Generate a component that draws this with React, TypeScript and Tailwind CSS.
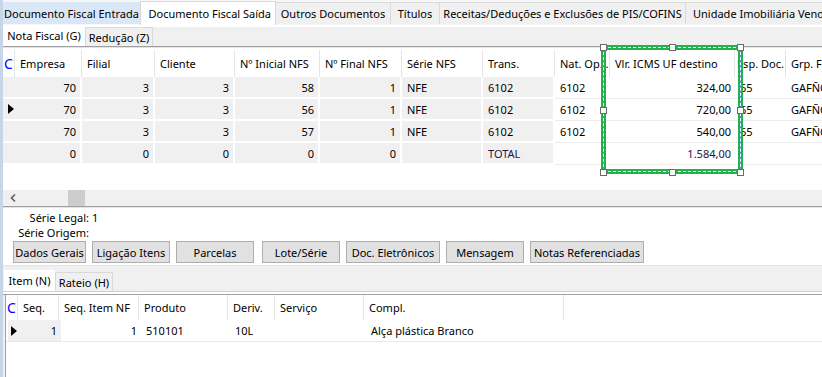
import React from "react";

const F = { fontFamily: '"Noto Sans", "Open Sans", sans-serif' };

type Col = { w: number; label: string; align?: "r" | "l"; pl?: number };

const cols1: Col[] = [
  { w: 67, label: "Empresa", align: "r" },
  { w: 73, label: "Filial", align: "r" },
  { w: 80, label: "Cliente", align: "r" },
  { w: 85, label: "Nº Inicial NFS", align: "r" },
  { w: 82, label: "Nº Final NFS", align: "r" },
  { w: 81, label: "Série NFS" },
  { w: 72, label: "Trans." },
  { w: 55, label: "Nat. Op..." },
  { w: 125, label: "Vlr. ICMS UF destino", align: "r" },
  { w: 51, label: "Esp. Doc.", pl: 2 },
  { w: 120, label: "Grp. Fornecedor" },
];

const rows1 = [
  ["70", "3", "3", "58", "1", "NFE", "6102", "6102", "324,00", "65", "GAFÑOTO"],
  ["70", "3", "3", "56", "1", "NFE", "6102", "6102", "720,00", "65", "GAFÑOTO"],
  ["70", "3", "3", "57", "1", "NFE", "6102", "6102", "540,00", "65", "GAFÑOTO"],
];

function Arrow() {
  return (
    <svg width="6" height="10" viewBox="0 0 6 10" className="block">
      <path d="M0 0 L6 5 L0 10 Z" fill="#000" />
    </svg>
  );
}

function Handle({ x, y }: { x: number; y: number }) {
  return (
    <div
      className="absolute w-[7px] h-[7px] bg-white border border-[#6b6b6b]"
      style={{ left: x - 3, top: y - 3 }}
    />
  );
}

export default function App() {
  return (
    <div
      className="relative w-[822px] h-[377px] overflow-hidden bg-white flex text-[11px] text-black leading-none"
      style={F}
    >
      <div className="w-[3px] shrink-0 bg-[#c6d5ea]" />
      <div className="flex-1 flex flex-col min-w-0">
        {/* top tabs */}
        <div className="h-[25px] shrink-0 flex items-end bg-[#f7f7f7] whitespace-nowrap overflow-hidden">
          <div className="shrink-0 w-[137px] h-[22px] bg-[#dae7f6] flex items-center pl-[1px] mb-[1px]">Documento Fiscal Entrada</div>
          <div className="shrink-0 w-[136px] h-[24px] bg-white border-x border-t border-[#d9d9d9] flex items-center justify-end pr-[4px]">Documento Fiscal Saída</div>
          <div className="shrink-0 w-[115px] h-[22px] bg-[#f0f0f0] border-r border-t border-[#d9d9d9] flex items-center justify-center mb-[1px]">Outros Documentos</div>
          <div className="shrink-0 w-[49px] h-[22px] bg-[#f0f0f0] border-r border-t border-[#d9d9d9] flex items-center justify-center mb-[1px]">Títulos</div>
          <div className="shrink-0 w-[246px] h-[22px] bg-[#f0f0f0] border-r border-t border-[#d9d9d9] flex items-center justify-center mb-[1px]">Receitas/Deduções e Exclusões de PIS/COFINS</div>
          <div className="shrink-0 w-[160px] h-[22px] bg-[#f0f0f0] border-t border-[#d9d9d9] flex items-center pl-[7px] mb-[1px]">Unidade Imobiliária Venda</div>
        </div>
        {/* sub tabs */}
        <div className="h-[21px] shrink-0 flex items-end bg-[#f0f0f0] border-t-[2px] border-white">
          <div className="shrink-0 w-[82px] h-[21px] bg-white flex items-center justify-center">Nota Fiscal (G)</div>
          <div className="shrink-0 w-[68px] h-[19px] bg-[#f0f0f0] border border-b-0 border-[#d9d9d9] flex items-center justify-center">Redução (Z)</div>
        </div>
        <div className="h-[1px] bg-[#a0a0a0] shrink-0" />
        <div className="h-[1px] bg-[#e3e3e3] shrink-0" />
        {/* grid 1 */}
        <div className="h-[142px] shrink-0 bg-white overflow-hidden">
          <div className="h-[29px] flex whitespace-nowrap pt-[2px]">
            <div className="w-[12px] shrink-0 flex items-center justify-center text-[14px] text-[#0000ff] border-r border-[#e5e5e5]">C</div>
            {cols1.map((c, i) => (
              <div
                key={i}
                className="shrink-0 flex items-center border-r border-[#e5e5e5] overflow-hidden"
                style={{ width: c.w, paddingLeft: c.pl ?? 5 }}
              >
                {c.label}
              </div>
            ))}
          </div>
          {rows1.map((r, ri) => (
            <div key={ri} className="h-[22px] flex whitespace-nowrap">
              <div className="w-[12px] shrink-0 bg-[#f0f0f0] border-b-2 border-white flex items-center pl-[5px]">
                {ri === 1 ? <Arrow /> : null}
              </div>
              {cols1.map((c, i) => {
                const gray = i < 7;
                return (
                  <div
                    key={i}
                    className={
                      "shrink-0 flex items-center overflow-hidden " +
                      (gray ? "bg-[#f0f0f0] border-b-2 border-r-2 border-white " : "bg-white border-b border-[#ececec] ") +
                      (c.align === "r" ? "justify-end pr-[4px]" : "pl-[5px]")
                    }
                    style={{ width: c.w }}
                  >
                    {r[i]}
                  </div>
                );
              })}
            </div>
          ))}
          <div className="h-[22px] flex whitespace-nowrap">
            <div className="w-[12px] shrink-0 bg-[#f0f0f0] border-b-2 border-white" />
            {cols1.map((c, i) => {
              const gray = i < 7;
              const vals = ["0", "0", "0", "0", "0", "", "TOTAL", "", "1.584,00", "", ""];
              return (
                <div
                  key={i}
                  className={
                    "shrink-0 flex items-center overflow-hidden " +
                    (gray ? "bg-[#f0f0f0] border-b-2 border-r-2 border-white " : "bg-white border-b border-[#ececec] ") +
                    (c.align === "r" ? "justify-end pr-[4px] " : "pl-[5px] ") +
                    (i >= 6 ? "text-[#2a1245]" : "")
                  }
                  style={{ width: c.w }}
                >
                  {i < 9 ? vals[i] : ""}
                </div>
              );
            })}
          </div>
        </div>
        {/* scrollbar */}
        <div className="h-[16px] shrink-0 bg-[#f0f0f0] flex items-center">
          <div className="w-[17px] flex items-center justify-center pl-[3px]">
            <svg width="6" height="8" viewBox="0 0 6 8" className="block">
              <path d="M5 0.5 L1.5 4 L5 7.5" fill="none" stroke="#606060" strokeWidth="1.6" />
            </svg>
          </div>
          <div className="ml-[48px] w-[17px] h-full bg-[#cdcdcd]" />
        </div>
        <div className="h-[1px] bg-[#a0a0a0] shrink-0" />
        <div className="h-[1px] bg-[#e3e3e3] shrink-0" />
        {/* labels */}
        <div className="flex flex-col pt-[3px] gap-[3px] shrink-0">
          <div className="flex h-[12px] items-center">
            <div className="w-[86px] text-right">Série Legal:</div>
            <div className="pl-[3px]">1</div>
          </div>
          <div className="flex h-[12px] items-center">
            <div className="w-[86px] text-right">Série Origem:</div>
          </div>
        </div>
        {/* buttons */}
        <div className="flex pl-[10px] pt-[3px] gap-[6px] shrink-0 whitespace-nowrap">
          {[
            ["Dados Gerais", 73],
            ["Ligação Itens", 78],
            ["Parcelas", 78],
            ["Lote/Série", 78],
            ["Doc. Eletrônicos", 94],
            ["Mensagem", 78],
            ["Notas Referenciadas", 114],
          ].map(([t, w], i) => (
            <div
              key={i}
              className="shrink-0 h-[22px] bg-[#e1e1e1] border border-[#adadad] flex items-center justify-center"
              style={{ width: w as number, marginLeft: i === 3 ? 2 : 0 }}
            >
              {t}
            </div>
          ))}
        </div>
        <div className="h-[2px] shrink-0" />
        <div className="h-[1px] bg-[#e3e3e3] shrink-0" />
        {/* bottom tabs */}
        <div className="h-[25px] shrink-0 flex items-end bg-[#f0f0f0] pl-[1px]">
          <div className="shrink-0 w-[51px] h-[21px] bg-white flex items-center justify-center">Item (N)</div>
          <div className="shrink-0 w-[58px] h-[19px] bg-[#f0f0f0] border border-b-0 border-[#d9d9d9] flex items-center justify-center">Rateio (H)</div>
        </div>
        <div className="h-[1px] bg-[#d0d0d0] shrink-0" />
        <div className="h-[2px] shrink-0 bg-white" />
        <div className="h-[1px] bg-[#a0a0a0] shrink-0" />
        {/* grid 2 */}
        <div className="flex-1 flex bg-white">
          <div className="w-[2px] bg-[#f0f0f0]" />
          <div className="w-[1px] bg-[#a0a0a0]" />
          <div className="flex-1 flex flex-col">
            <div className="h-[25px] flex whitespace-nowrap">
              <div className="w-[12px] shrink-0 flex items-center justify-center text-[14px] text-[#0000ff] border-r border-[#e5e5e5]">C</div>
              {[
                ["Seq.", 41],
                ["Seq. Item NF", 80],
                ["Produto", 89],
                ["Deriv.", 47],
                ["Serviço", 89],
                ["Compl.", 200],
              ].map(([t, w], i) => (
                <div key={i} className="shrink-0 flex items-center pl-[5px] border-r border-[#e5e5e5]" style={{ width: w as number }}>
                  {t}
                </div>
              ))}
            </div>
            <div className="h-[22px] flex whitespace-nowrap border-b border-[#e8e8e8]">
              <div className="w-[53px] shrink-0 bg-[#f0f0f0] flex items-center justify-between pl-[3px] pr-[4px] ml-[2px]">
                <Arrow />
                <span>1</span>
              </div>
              <div className="w-[80px] shrink-0 flex items-center justify-end pr-[4px]">1</div>
              <div className="w-[89px] shrink-0 flex items-center pl-[5px]">510101</div>
              <div className="w-[47px] shrink-0 flex items-center pl-[5px]">10L</div>
              <div className="w-[89px] shrink-0 flex items-center pl-[5px]"></div>
              <div className="w-[200px] shrink-0 flex items-center pl-[5px]">Alça plástica Branco</div>
            </div>
          </div>
        </div>
      </div>

      {/* selection overlay */}
      <div className="absolute left-[601px] top-[45px] w-[142px] h-[129px] pointer-events-none">
        <div className="absolute inset-0 border-[5px] border-[#22b14c]" />
        <div className="absolute inset-[2px] border border-[#3b8fe0]" />
        <div className="absolute inset-[2px] border border-dashed border-white" />
      </div>
      <Handle x={603} y={47} />
      <Handle x={672} y={47} />
      <Handle x={740} y={47} />
      <Handle x={603} y={110} />
      <Handle x={740} y={110} />
      <Handle x={603} y={172} />
      <Handle x={672} y={172} />
      <Handle x={740} y={172} />
    </div>
  );
}
